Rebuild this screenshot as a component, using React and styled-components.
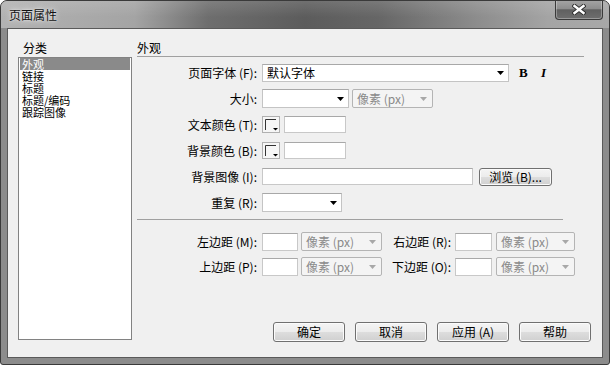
import React from "react";
import styled, { createGlobalStyle } from "styled-components";

const GlobalStyle = createGlobalStyle`
  html, body { margin: 0; padding: 0; background: #ffffff; }
  body { font-family: "Noto Sans CJK SC", "Noto Sans", sans-serif; font-size: 12px; color: #000; }
  * { box-sizing: border-box; }
`;

const Window = styled.div`
  width: 610px;
  height: 365px;
  display: flex;
  flex-direction: column;
  border: 1px solid #3a3a3a;
  border-radius: 7px 7px 3px 3px;
  background: #8c8c8c;
  padding: 0 6px 6px;
  overflow: hidden;
`;

const TitleBar = styled.div`
  margin: 0 -6px;
  height: 27px;
  flex: none;
  display: flex;
  justify-content: space-between;
  align-items: flex-start;
  padding-left: 8px;
  background:
    linear-gradient(to bottom, rgba(255,255,255,0.12), rgba(255,255,255,0) 60%),
    linear-gradient(to right, #b2b2b2 0%, #a4a4a4 22%, #6e6e6e 34%, #5c5c5c 50%, #666666 62%, #8c8c8c 78%, #a4a4a4 90%, #a8a8a8 100%);
`;

const Title = styled.div`
  padding-top: 7px;
  line-height: 14px;
  font-size: 12px;
  color: #111;
  text-shadow: 0 0 6px rgba(255,255,255,0.9), 0 0 2px rgba(255,255,255,0.7);
`;

const CloseButton = styled.div`
  width: 48px;
  height: 20px;
  margin-right: 6px;
  margin-top: -1px;
  border: 1px solid #3a3a3a;
  border-top: none;
  border-radius: 0 0 4px 4px;
  background: linear-gradient(to bottom, #a6a6a6 0%, #8e8e8e 45%, #606060 52%, #6e6e6e 100%);
  box-shadow: inset 0 0 0 1px rgba(255,255,255,0.3);
  display: flex;
  align-items: center;
  justify-content: center;
`;

const Client = styled.div`
  flex: 1;
  background: #f0f0f0;
  border: 1px solid #5a5a5a;
  display: flex;
  align-items: flex-start;
  padding: 12px 10px 0 10px;
`;

const LeftCol = styled.div`
  width: 114px;
  display: flex;
  flex-direction: column;
`;

const Heading = styled.div`
  line-height: 14px;
  height: 14px;
  padding-left: ${(p) => p.$indent || 0}px;
`;

const ListBox = styled.div`
  margin-top: 2px;
  height: 283px;
  background: #fff;
  border: 1px solid #828282;
  padding: 0 1px;
`;

const ListItem = styled.div`
  height: 12px;
  line-height: 12px;
  font-size: 11px;
  padding-left: 2px;
  white-space: nowrap;
  background: ${(p) => (p.$selected ? "#8a8a8a" : "transparent")};
  color: ${(p) => (p.$selected ? "#fff" : "#000")};
`;

const RightCol = styled.div`
  margin-left: 5px;
  width: 455px;
  height: 301px;
  display: flex;
  flex-direction: column;
`;

const Rule = styled.div`
  width: ${(p) => p.$w}px;
  height: 1px;
  background: #a0a0a0;
  margin-top: ${(p) => p.$mt}px;
`;

const Form = styled.div`
  margin-top: ${(p) => p.$mt}px;
  display: flex;
  flex-direction: column;
  gap: ${(p) => p.$gap}px;
`;

const Row = styled.div`
  height: 19px;
  display: flex;
  align-items: center;
`;

const Label = styled.div`
  width: ${(p) => p.$w}px;
  text-align: right;
  white-space: nowrap;
  line-height: 14px;
  margin-right: ${(p) => p.$mr ?? 5}px;
`;

const TextInput = styled.div`
  width: ${(p) => p.$w}px;
  height: ${(p) => p.$h || 17}px;
  margin-left: ${(p) => p.$ml || 0}px;
  background: #fff;
  border: 1px solid #c8c8c8;
  border-top-color: #a8a8a8;
  padding-left: 4px;
  line-height: ${(p) => (p.$h || 17) - 2}px;
  white-space: nowrap;
`;

const SelectBox = styled.div`
  width: ${(p) => p.$w}px;
  height: ${(p) => p.$h || 19}px;
  margin-left: ${(p) => p.$ml || 0}px;
  background: ${(p) => (p.$disabled ? "#f4f4f4" : "#fff")};
  border: 1px solid ${(p) => (p.$disabled ? "#b4b4b4" : "#c4c4c4")};
  border-top-color: ${(p) => (p.$disabled ? "#b4b4b4" : "#a8a8a8")};
  border-radius: ${(p) => (p.$disabled ? "2px" : "0")};
  color: ${(p) => (p.$disabled ? "#8a8a8a" : "#000")};
  display: flex;
  align-items: center;
  justify-content: space-between;
  padding: 0 ${(p) => (p.$disabled ? 5 : 4)}px 0 4px;
  white-space: nowrap;
`;

const Swatch = styled.div`
  width: 18px;
  height: 17px;
  background: #f6f6f6;
  border: 1px solid #b0b0b0;
  display: flex;
`;

const StyleToggle = styled.div`
  width: 10px;
  margin-left: ${(p) => p.$ml}px;
  font-family: "Liberation Serif", "DejaVu Serif", serif;
  font-weight: bold;
  font-style: ${(p) => (p.$italic ? "italic" : "normal")};
  font-size: 13px;
  line-height: 14px;
`;

const PushButton = styled.div`
  width: ${(p) => p.$w}px;
  height: ${(p) => p.$h || 20}px;
  margin-left: ${(p) => p.$ml || 0}px;
  border: 1px solid #707070;
  border-radius: 3px;
  background: linear-gradient(to bottom, #f4f4f4 0%, #ececec 48%, #dddddd 52%, #d0d0d0 100%);
  box-shadow: inset 0 0 0 1px #fbfbfb;
  display: flex;
  align-items: center;
  justify-content: center;
  white-space: nowrap;
  line-height: 14px;
`;

const ButtonRow = styled.div`
  margin-top: auto;
  display: flex;
  justify-content: flex-end;
  gap: 10px;
  padding-right: 1px;
`;

const Caret = ({ disabled }) => (
  <svg width="7" height="4" viewBox="0 0 7 4">
    <path d="M0 0 H7 L3.5 4 Z" fill={disabled ? "#a8a8a8" : "#000"} />
  </svg>
);

const CloseIcon = () => (
  <svg width="14" height="11" viewBox="0 0 14 11">
    <path d="M2.5 2 L11.5 9 M11.5 2 L2.5 9" stroke="#2e2e2e" strokeWidth="4.2" strokeLinecap="square" />
    <path d="M2.5 2 L11.5 9 M11.5 2 L2.5 9" stroke="#ffffff" strokeWidth="2.4" strokeLinecap="square" />
  </svg>
);

const SwatchIcon = () => (
  <svg width="16" height="15" viewBox="0 0 16 15">
    <path d="M2.5 13 V2.5 H13" stroke="#333" strokeWidth="1" fill="none" />
    <path d="M10 11 H15 L12.5 13.5 Z" fill="#000" />
  </svg>
);

const Select = ({ w, ml, disabled, text, h }) => (
  <SelectBox $w={w} $ml={ml} $disabled={disabled} $h={h}>
    <span>{text}</span>
    <Caret disabled={disabled} />
  </SelectBox>
);

const ColorRow = ({ label }) => (
  <Row>
    <Label $w={120}>{label}</Label>
    <Swatch>
      <SwatchIcon />
    </Swatch>
    <TextInput $w={62} $ml={4} />
  </Row>
);

const MarginRow = ({ left, right }) => (
  <Row>
    <Label $w={120}>{left}</Label>
    <TextInput $w={36} $h={18} />
    <Select w={81} ml={3} disabled text="像素 (px)" />
    <Label $w={69} $mr={4}>{right}</Label>
    <TextInput $w={37} $h={18} />
    <Select w={79} ml={4} disabled text="像素 (px)" />
  </Row>
);

const categories = ["外观", "链接", "标题", "标题/编码", "跟踪图像"];

export default function App() {
  return (
    <>
      <GlobalStyle />
      <Window>
        <TitleBar>
          <Title>页面属性</Title>
          <CloseButton>
            <CloseIcon />
          </CloseButton>
        </TitleBar>
        <Client>
          <LeftCol>
            <Heading $indent={5}>分类</Heading>
            <ListBox>
              {categories.map((c, i) => (
                <ListItem key={c} $selected={i === 0}>
                  {c}
                </ListItem>
              ))}
            </ListBox>
          </LeftCol>
          <RightCol>
            <Heading>外观</Heading>
            <Rule $w={447} $mt={1} />
            <Form $mt={6} $gap={7}>
              <Row>
                <Label $w={120}>页面字体 (F):</Label>
                <SelectBox $w={247} $h={18}>
                  <span>默认字体</span>
                  <Caret />
                </SelectBox>
                <StyleToggle $ml={10}>B</StyleToggle>
                <StyleToggle $ml={12} $italic>I</StyleToggle>
              </Row>
              <Row>
                <Label $w={120}>大小:</Label>
                <Select w={87} text="" />
                <Select w={81} ml={3} disabled text="像素 (px)" />
              </Row>
              <ColorRow label="文本颜色 (T):" />
              <ColorRow label="背景颜色 (B):" />
              <Row>
                <Label $w={120}>背景图像 (I):</Label>
                <TextInput $w={211} />
                <PushButton $w={73} $h={18} $ml={6}>浏览 (B)...</PushButton>
              </Row>
              <Row>
                <Label $w={120}>重复 (R):</Label>
                <Select w={80} text="" />
              </Row>
            </Form>
            <Rule $w={426} $mt={7} />
            <Form $mt={12} $gap={6}>
              <MarginRow left="左边距 (M):" right="右边距 (R):" />
              <MarginRow left="上边距 (P):" right="下边距 (O):" />
            </Form>
            <ButtonRow>
              <PushButton $w={72}>确定</PushButton>
              <PushButton $w={72}>取消</PushButton>
              <PushButton $w={72}>应用 (A)</PushButton>
              <PushButton $w={72}>帮助</PushButton>
            </ButtonRow>
          </RightCol>
        </Client>
      </Window>
    </>
  );
}
